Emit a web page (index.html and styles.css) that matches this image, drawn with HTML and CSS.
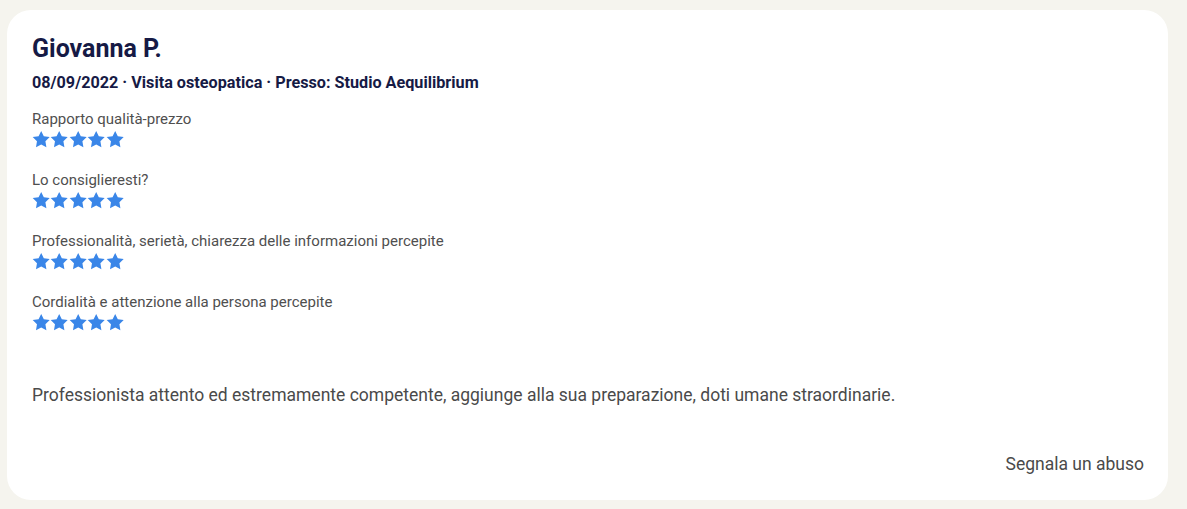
FILE: index.html
```html
<!DOCTYPE html>
<html lang="it">
<head>
    <meta charset="UTF-8">
    <meta name="viewport" content="width=device-width, initial-scale=1.0">
    <title>Recensione</title>
    <link rel="stylesheet" href="styles.css">
</head>
<body>
    <div class="review-card">
        <h2 class="review-name">Giovanna P.</h2>
        <p class="review-meta">08/09/2022 · Visita osteopatica · Presso: Studio Aequilibrium</p>

        <div class="ratings">
            <div class="rating">
                <span class="rating-label">Rapporto qualità-prezzo</span>
                <div class="stars">
                    <svg viewBox="0 0 24 24"><path d="M12 .8l3.4 7 7.7 1.1-5.6 5.4 1.3 7.7L12 18.4 5.2 22l1.3-7.7L.9 8.9l7.7-1.1z"/></svg>
                    <svg viewBox="0 0 24 24"><path d="M12 .8l3.4 7 7.7 1.1-5.6 5.4 1.3 7.7L12 18.4 5.2 22l1.3-7.7L.9 8.9l7.7-1.1z"/></svg>
                    <svg viewBox="0 0 24 24"><path d="M12 .8l3.4 7 7.7 1.1-5.6 5.4 1.3 7.7L12 18.4 5.2 22l1.3-7.7L.9 8.9l7.7-1.1z"/></svg>
                    <svg viewBox="0 0 24 24"><path d="M12 .8l3.4 7 7.7 1.1-5.6 5.4 1.3 7.7L12 18.4 5.2 22l1.3-7.7L.9 8.9l7.7-1.1z"/></svg>
                    <svg viewBox="0 0 24 24"><path d="M12 .8l3.4 7 7.7 1.1-5.6 5.4 1.3 7.7L12 18.4 5.2 22l1.3-7.7L.9 8.9l7.7-1.1z"/></svg>
                </div>
            </div>
            <div class="rating">
                <span class="rating-label">Lo consiglieresti?</span>
                <div class="stars">
                    <svg viewBox="0 0 24 24"><path d="M12 .8l3.4 7 7.7 1.1-5.6 5.4 1.3 7.7L12 18.4 5.2 22l1.3-7.7L.9 8.9l7.7-1.1z"/></svg>
                    <svg viewBox="0 0 24 24"><path d="M12 .8l3.4 7 7.7 1.1-5.6 5.4 1.3 7.7L12 18.4 5.2 22l1.3-7.7L.9 8.9l7.7-1.1z"/></svg>
                    <svg viewBox="0 0 24 24"><path d="M12 .8l3.4 7 7.7 1.1-5.6 5.4 1.3 7.7L12 18.4 5.2 22l1.3-7.7L.9 8.9l7.7-1.1z"/></svg>
                    <svg viewBox="0 0 24 24"><path d="M12 .8l3.4 7 7.7 1.1-5.6 5.4 1.3 7.7L12 18.4 5.2 22l1.3-7.7L.9 8.9l7.7-1.1z"/></svg>
                    <svg viewBox="0 0 24 24"><path d="M12 .8l3.4 7 7.7 1.1-5.6 5.4 1.3 7.7L12 18.4 5.2 22l1.3-7.7L.9 8.9l7.7-1.1z"/></svg>
                </div>
            </div>
            <div class="rating">
                <span class="rating-label">Professionalità, serietà, chiarezza delle informazioni percepite</span>
                <div class="stars">
                    <svg viewBox="0 0 24 24"><path d="M12 .8l3.4 7 7.7 1.1-5.6 5.4 1.3 7.7L12 18.4 5.2 22l1.3-7.7L.9 8.9l7.7-1.1z"/></svg>
                    <svg viewBox="0 0 24 24"><path d="M12 .8l3.4 7 7.7 1.1-5.6 5.4 1.3 7.7L12 18.4 5.2 22l1.3-7.7L.9 8.9l7.7-1.1z"/></svg>
                    <svg viewBox="0 0 24 24"><path d="M12 .8l3.4 7 7.7 1.1-5.6 5.4 1.3 7.7L12 18.4 5.2 22l1.3-7.7L.9 8.9l7.7-1.1z"/></svg>
                    <svg viewBox="0 0 24 24"><path d="M12 .8l3.4 7 7.7 1.1-5.6 5.4 1.3 7.7L12 18.4 5.2 22l1.3-7.7L.9 8.9l7.7-1.1z"/></svg>
                    <svg viewBox="0 0 24 24"><path d="M12 .8l3.4 7 7.7 1.1-5.6 5.4 1.3 7.7L12 18.4 5.2 22l1.3-7.7L.9 8.9l7.7-1.1z"/></svg>
                </div>
            </div>
            <div class="rating">
                <span class="rating-label">Cordialità e attenzione alla persona percepite</span>
                <div class="stars">
                    <svg viewBox="0 0 24 24"><path d="M12 .8l3.4 7 7.7 1.1-5.6 5.4 1.3 7.7L12 18.4 5.2 22l1.3-7.7L.9 8.9l7.7-1.1z"/></svg>
                    <svg viewBox="0 0 24 24"><path d="M12 .8l3.4 7 7.7 1.1-5.6 5.4 1.3 7.7L12 18.4 5.2 22l1.3-7.7L.9 8.9l7.7-1.1z"/></svg>
                    <svg viewBox="0 0 24 24"><path d="M12 .8l3.4 7 7.7 1.1-5.6 5.4 1.3 7.7L12 18.4 5.2 22l1.3-7.7L.9 8.9l7.7-1.1z"/></svg>
                    <svg viewBox="0 0 24 24"><path d="M12 .8l3.4 7 7.7 1.1-5.6 5.4 1.3 7.7L12 18.4 5.2 22l1.3-7.7L.9 8.9l7.7-1.1z"/></svg>
                    <svg viewBox="0 0 24 24"><path d="M12 .8l3.4 7 7.7 1.1-5.6 5.4 1.3 7.7L12 18.4 5.2 22l1.3-7.7L.9 8.9l7.7-1.1z"/></svg>
                </div>
            </div>
        </div>

        <p class="review-text">Professionista attento ed estremamente competente, aggiunge alla sua preparazione, doti umane straordinarie.</p>

        <div class="review-footer">
            <a href="#" class="report-link">Segnala un abuso</a>
        </div>
    </div>
</body>
</html>
```

FILE: styles.css
```css
body {
    font-family: Roboto, "Noto Sans", Arial, sans-serif;
    background-color: #f5f4ee;
    margin: 0;
    padding: 10px 19px 9px 7px;
}

.review-card {
    background-color: #ffffff;
    border-radius: 24px;
    padding: 24px 24px 25px 25px;
    color: #4a4a4a;
}

.review-name {
    margin: 0;
    font-size: 25px;
    font-weight: 700;
    line-height: 30px;
    color: #161a45;
}

.review-meta {
    margin: 9px 0 0;
    font-size: 16.2px;
    font-weight: 700;
    line-height: 20px;
    color: #161a45;
}

.ratings {
    display: flex;
    flex-direction: column;
    gap: 22px;
    margin-top: 17px;
}

.rating {
    display: flex;
    flex-direction: column;
    gap: 2px;
}

.rating-label {
    font-size: 15px;
    font-weight: 400;
    line-height: 18px;
    color: #4f4f4f;
}

.stars {
    display: flex;
    height: 19px;
}

.stars svg {
    width: 18.4px;
    height: 19px;
    fill: #3a86e8;
}

.review-text {
    margin: 52px 0 0;
    font-size: 17.5px;
    font-weight: 400;
    line-height: 22px;
    color: #4a4a4a;
}

.review-footer {
    display: flex;
    justify-content: flex-end;
    margin-top: 47px;
}

.report-link {
    font-size: 17.5px;
    font-weight: 400;
    line-height: 22px;
    color: #4a4a4a;
    text-decoration: none;
}

.report-link:hover {
    text-decoration: underline;
}
```
